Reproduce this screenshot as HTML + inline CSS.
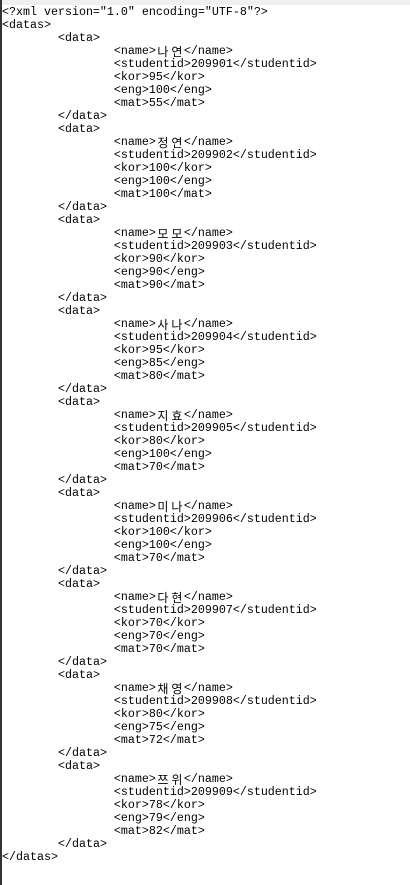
<!DOCTYPE html>
<html><head><meta charset="utf-8"><style>
html,body{margin:0;padding:0;background:#fff;width:410px;height:885px;overflow:hidden}
.top{position:absolute;left:0;top:0;width:410px;height:5px;background:#f0f0f0}
.lb{position:absolute;left:0;top:0;width:2px;height:885px;background:#333}
pre{position:absolute;left:2px;top:6px;margin:0;font-family:"Liberation Mono","Noto Sans CJK KR",monospace;font-size:11.67px;line-height:13px;color:#000;tab-size:8}
.k{display:inline-block;width:14px;font-family:"Noto Sans CJK KR","NanumGothic",sans-serif;font-size:12px;text-align:center;line-height:13px;vertical-align:top}
</style></head><body>
<div class="top"></div><div class="lb"></div>
<pre>&lt;?xml version="1.0" encoding="UTF-8"?&gt;
&lt;datas&gt;
	&lt;data&gt;
		&lt;name&gt;<span class="k">나</span><span class="k">연</span>&lt;/name&gt;
		&lt;studentid&gt;209901&lt;/studentid&gt;
		&lt;kor&gt;95&lt;/kor&gt;
		&lt;eng&gt;100&lt;/eng&gt;
		&lt;mat&gt;55&lt;/mat&gt;
	&lt;/data&gt;
	&lt;data&gt;
		&lt;name&gt;<span class="k">정</span><span class="k">연</span>&lt;/name&gt;
		&lt;studentid&gt;209902&lt;/studentid&gt;
		&lt;kor&gt;100&lt;/kor&gt;
		&lt;eng&gt;100&lt;/eng&gt;
		&lt;mat&gt;100&lt;/mat&gt;
	&lt;/data&gt;
	&lt;data&gt;
		&lt;name&gt;<span class="k">모</span><span class="k">모</span>&lt;/name&gt;
		&lt;studentid&gt;209903&lt;/studentid&gt;
		&lt;kor&gt;90&lt;/kor&gt;
		&lt;eng&gt;90&lt;/eng&gt;
		&lt;mat&gt;90&lt;/mat&gt;
	&lt;/data&gt;
	&lt;data&gt;
		&lt;name&gt;<span class="k">사</span><span class="k">나</span>&lt;/name&gt;
		&lt;studentid&gt;209904&lt;/studentid&gt;
		&lt;kor&gt;95&lt;/kor&gt;
		&lt;eng&gt;85&lt;/eng&gt;
		&lt;mat&gt;80&lt;/mat&gt;
	&lt;/data&gt;
	&lt;data&gt;
		&lt;name&gt;<span class="k">지</span><span class="k">효</span>&lt;/name&gt;
		&lt;studentid&gt;209905&lt;/studentid&gt;
		&lt;kor&gt;80&lt;/kor&gt;
		&lt;eng&gt;100&lt;/eng&gt;
		&lt;mat&gt;70&lt;/mat&gt;
	&lt;/data&gt;
	&lt;data&gt;
		&lt;name&gt;<span class="k">미</span><span class="k">나</span>&lt;/name&gt;
		&lt;studentid&gt;209906&lt;/studentid&gt;
		&lt;kor&gt;100&lt;/kor&gt;
		&lt;eng&gt;100&lt;/eng&gt;
		&lt;mat&gt;70&lt;/mat&gt;
	&lt;/data&gt;
	&lt;data&gt;
		&lt;name&gt;<span class="k">다</span><span class="k">현</span>&lt;/name&gt;
		&lt;studentid&gt;209907&lt;/studentid&gt;
		&lt;kor&gt;70&lt;/kor&gt;
		&lt;eng&gt;70&lt;/eng&gt;
		&lt;mat&gt;70&lt;/mat&gt;
	&lt;/data&gt;
	&lt;data&gt;
		&lt;name&gt;<span class="k">채</span><span class="k">영</span>&lt;/name&gt;
		&lt;studentid&gt;209908&lt;/studentid&gt;
		&lt;kor&gt;80&lt;/kor&gt;
		&lt;eng&gt;75&lt;/eng&gt;
		&lt;mat&gt;72&lt;/mat&gt;
	&lt;/data&gt;
	&lt;data&gt;
		&lt;name&gt;<span class="k">쯔</span><span class="k">위</span>&lt;/name&gt;
		&lt;studentid&gt;209909&lt;/studentid&gt;
		&lt;kor&gt;78&lt;/kor&gt;
		&lt;eng&gt;79&lt;/eng&gt;
		&lt;mat&gt;82&lt;/mat&gt;
	&lt;/data&gt;
&lt;/datas&gt;</pre>
</body></html>
